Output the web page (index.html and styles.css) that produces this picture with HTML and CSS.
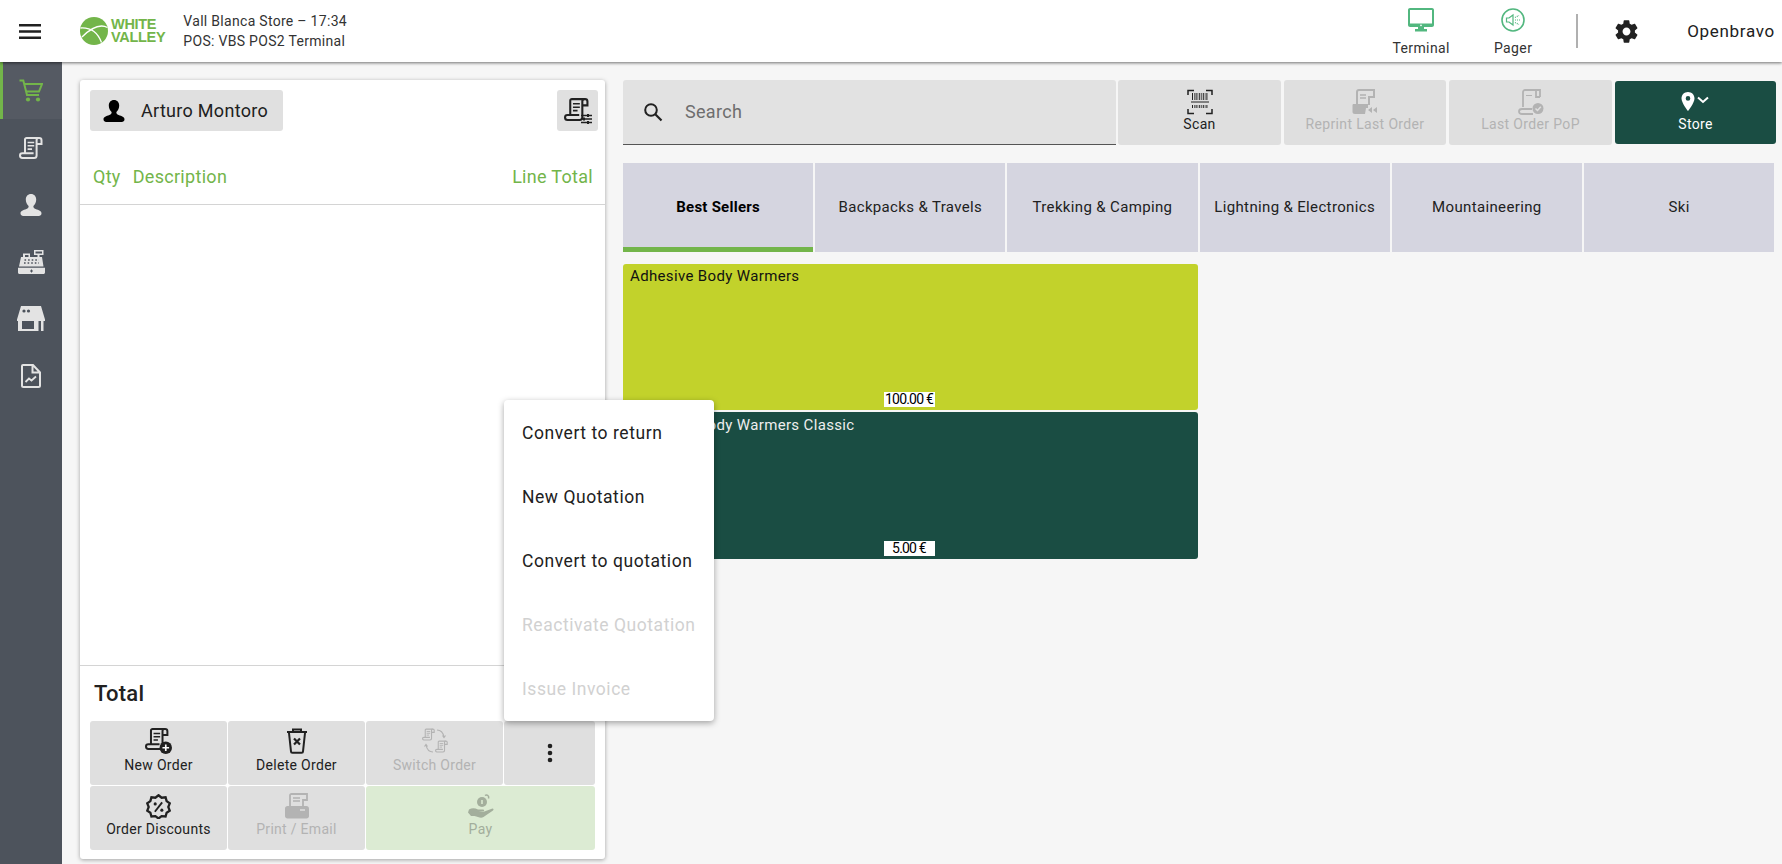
FILE: index.html
```html
<!DOCTYPE html>
<html lang="en">
<head>
<meta charset="utf-8">
<title>Openbravo POS</title>
<link rel="stylesheet" href="styles.css">
</head>
<body>
<svg class="defs" width="0" height="0" aria-hidden="true">
  <symbol id="i-receipt" viewBox="0 0 24 24">
    <path fill="none" stroke="currentColor" stroke-width="2" d="M6 17V3.6C6 2.7 6.700 2 7.600 2H19.500M19.500 2C18.400 2 17.600 2.900 17.600 4V19.500C17.600 21 16.500 22 15 22H3.400C2 22 1 21 1 19.600 1 18.200 2 17.300 3.400 17.300H14.600"/>
    <path fill="none" stroke="currentColor" stroke-width="2" d="M18 2H20.200C21.500 2 22.500 3 22.500 4.200V8H18"/>
    <path stroke="currentColor" stroke-width="1.600" d="M8.600 6.500H15.200M8.600 9.800H15.200M8.600 13.100H13"/>
  </symbol>
  <symbol id="i-person" viewBox="0 0 24 24">
    <path fill="currentColor" d="M12 1C15.200 1 17.200 3.400 17.200 6.600 17.200 9.400 16 11.800 14.400 13 14.200 14.400 14.900 15.400 16.600 16 19.800 17 22.500 18 22.500 20.400 22.500 22.300 20.600 23 18.500 23H5.500C3.400 23 1.500 22.300 1.500 20.400 1.500 18 4.200 17 7.400 16 9.100 15.400 9.800 14.400 9.600 13 8 11.800 6.800 9.400 6.800 6.600 6.800 3.400 8.800 1 12 1Z"/>
  </symbol>
</svg>

<header class="topbar">
  <button class="menu-btn" aria-label="Menu">
    <svg viewBox="0 0 22 15" width="22" height="15"><path fill="#212121" d="M0 0H22V2.400H0ZM0 6.300H22V8.700H0ZM0 12.600H22V15H0Z"/></svg>
  </button>
  <div class="logo">
    <svg class="logo-mark" viewBox="0 0 28 28" width="28" height="28">
      <circle cx="14" cy="14" r="14" fill="#73b54a"/>
      <path fill="none" stroke="#fff" stroke-width="1.300" d="M.5 11C8 10.500 17 13.500 21.500 25.500M2 20C8.500 13.500 18 5.500 27.500 10.500"/>
    </svg>
    <div class="logo-text"><span>WHITE</span><span>VALLEY</span></div>
  </div>
  <div class="store-info">
    <div>Vall Blanca Store – 17:34</div>
    <div>POS: VBS POS2 Terminal</div>
  </div>
  <div class="top-right">
    <div class="top-action term">
      <svg viewBox="0 0 26 24" width="26" height="24"><path fill="#52b77f" d="M2 0H24C25.100 0 26 .9 26 2V17C26 18.100 25.100 19 24 19H16V21H19V23.500H7V21H10V19H2C.9 19 0 18.100 0 17V2C0 .9.9 0 2 0ZM2 2V15.600H24V2Z"/><circle cx="13" cy="17.300" r=".9" fill="#fff"/></svg>
      <span>Terminal</span>
    </div>
    <div class="top-action pager">
      <svg viewBox="0 0 24 24" width="24" height="24"><circle cx="12" cy="12" r="11" fill="none" stroke="#52b77f" stroke-width="1.600"/><path fill="none" stroke="#52b77f" stroke-width="1.200" d="M5.500 10V14H8L12 17V7L8 10Z"/><path stroke="#52b77f" stroke-width="1.200" stroke-dasharray="1 1" d="M14 12H19M14 9.500L18 7.500M14 14.500L18 16.500"/></svg>
      <span>Pager</span>
    </div>
    <div class="divider"></div>
    <svg class="gear" viewBox="0 0 24 24" width="27" height="27"><path fill="#212121" d="M19.430 12.980c.04-.32.07-.64.07-.98s-.03-.66-.07-.98l2.110-1.650c.19-.15.24-.42.12-.64l-2-3.460c-.12-.22-.39-.3-.61-.22l-2.490 1c-.52-.4-1.080-.73-1.690-.98l-.38-2.650C14.460 2.180 14.250 2 14 2h-4c-.25 0-.46.18-.49.42l-.38 2.650c-.61.25-1.170.59-1.690.98l-2.490-1c-.23-.09-.49 0-.61.22l-2 3.460c-.13.22-.07.49.12.64l2.110 1.650c-.04.32-.07.65-.07.98s.03.66.07.98l-2.110 1.650c-.19.15-.24.42-.12.64l2 3.460c.12.22.39.3.61.22l2.490-1c.52.4 1.080.73 1.690.98l.38 2.650c.03.24.24.42.49.42h4c.25 0 .46-.18.49-.42l.38-2.650c.61-.25 1.170-.59 1.690-.98l2.490 1c.23.09.49 0 .61-.22l2-3.460c.12-.22.07-.49-.12-.64l-2.110-1.650zM12 15.500c-1.930 0-3.500-1.570-3.500-3.500s1.570-3.500 3.500-3.500 3.500 1.570 3.500 3.500-1.570 3.500-3.500 3.500z"/></svg>
    <div class="user-name">Openbravo</div>
  </div>
</header>

<div class="app">
  <nav class="sidebar">
    <div class="nav-item active">
      <svg viewBox="0 0 24 24" width="24" height="24"><path fill="none" stroke="#73b54a" stroke-width="2" d="M.5 1.500H4.300L8 16H20"/><path fill="none" stroke="#73b54a" stroke-width="2" d="M5.200 5H23L20 12.500H7"/><circle cx="9" cy="20.500" r="2.100" fill="#73b54a"/><circle cx="19" cy="20.500" r="2.100" fill="#73b54a"/></svg>
    </div>
    <div class="nav-item"><svg width="24" height="24"><use href="#i-receipt"/></svg></div>
    <div class="nav-item"><svg width="24" height="24"><use href="#i-person"/></svg></div>
    <div class="nav-item">
      <svg viewBox="0 0 27 26" width="27" height="26"><path fill="currentColor" d="M16 1H25.500V6H21.500V8H24L25.500 17.500H1L3 8H5V4.500H12V8H19.500V6H16ZM17.500 2.400V4.600H24V2.400ZM7 6V8H10.500V6ZM0 18.800H27V23.500C27 24.300 26.300 25 25.500 25H1.500C.7 25 0 24.300 0 23.500Z"/><path stroke="#4d535c" stroke-width="1.500" stroke-dasharray="1.600 2" d="M6.500 11H21M6 14H21"/><path stroke="#4d535c" d="M13.500 20.500V23.500M12 22H15"/></svg>
    </div>
    <div class="nav-item">
      <svg viewBox="0 0 28 25" width="28" height="25"><path fill="currentColor" d="M4 0H24L28 13.500V15H26.500V25H24V15H21.500V25H1V15H0V13.500ZM5 15V23H17V15Z"/><circle cx="7" cy="5" r="1.600" fill="#4d535c"/><circle cx="11.500" cy="5" r="1.600" fill="#4d535c"/></svg>
    </div>
    <div class="nav-item">
      <svg viewBox="0 0 20 24" width="20" height="24"><path fill="none" stroke="currentColor" stroke-width="2" d="M2 1H12L19 8.500V21.500C19 22.300 18.300 23 17.500 23H2.500C1.700 23 1 22.300 1 21.500V2C1 1.400 1.400 1 2 1ZM11.500 1.500V8.500H18.500"/><path fill="none" stroke="currentColor" stroke-width="1.800" d="M4.500 18L8 14.500 10.500 16.500 15 12.500"/></svg>
    </div>
  </nav>

  <main class="main">
    <section class="ticket">
      <div class="ticket-top">
        <div class="customer">
          <svg width="24" height="24"><use href="#i-person"/></svg>
          <span>Arturo Montoro</span>
        </div>
        <button class="ticket-opts" aria-label="Ticket options">
          <svg viewBox="0 0 28 28" width="28" height="28"><use href="#i-receipt" width="25" height="25"/><path stroke="#212121" stroke-width="1.500" d="M17 18.500H28M17 22H28M17 25.500H28"/><path stroke="#212121" stroke-width="2" d="M24 17V20M20 20.500V23.500M24 24V27"/></svg>
        </button>
      </div>
      <div class="ticket-head">
        <span class="col-qty">Qty</span>
        <span class="col-desc">Description</span>
        <span class="col-total">Line Total</span>
      </div>
      <div class="ticket-lines"></div>
      <div class="ticket-total">Total</div>
      <div class="ticket-actions">
        <button class="act">
          <svg viewBox="0 0 26 26" width="27" height="27"><use href="#i-receipt" width="23" height="23"/><circle cx="20" cy="20" r="6" fill="#212121"/><path stroke="#fff" stroke-width="1.600" d="M16.800 20H23.200M20 16.800V23.200"/></svg>
          <span>New Order</span>
        </button>
        <button class="act">
          <svg viewBox="0 0 22 26" width="22" height="26"><path fill="none" stroke="#212121" stroke-width="2" d="M1 4H21M7 4V1.500H15V4M3 5L5 23.500C5 24.300 5.700 24.800 6.400 24.800H15.600C16.300 24.800 17 24.300 17 23.500L19 5"/><path stroke="#212121" stroke-width="2.200" d="M8 10.500L14 16.500M14 10.500L8 16.500"/></svg>
          <span>Delete Order</span>
        </button>
        <button class="act off">
          <svg viewBox="0 0 26 26" width="26" height="26"><use href="#i-receipt" x="0" y="0" width="13" height="13"/><use href="#i-receipt" x="13" y="12" width="13" height="13"/><path fill="none" stroke="currentColor" stroke-width="1.200" d="M15 2C18 2 21 4 22 9M20.500 7.500L22 9.500 23.500 7.500M11 24C8 24 5 22 4 17M2.500 18.500L4 16.500 5.500 18.500"/></svg>
          <span>Switch Order</span>
        </button>
        <button class="act more" aria-label="More">
          <svg viewBox="0 0 6 20" width="6" height="20"><circle cx="3" cy="3" r="2.300" fill="#212121"/><circle cx="3" cy="10" r="2.300" fill="#212121"/><circle cx="3" cy="17" r="2.300" fill="#212121"/></svg>
        </button>
        <button class="act low">
          <svg viewBox="0 0 24 24" width="25" height="25"><path fill="none" stroke="#212121" stroke-width="2.200" d="M12 1.200L15 3.600 18.800 3.200 19.800 6.800 22.800 9 21.400 12.500 22.800 16 19.800 18 18.800 21.600 15 21.200 12 23.500 9 21.200 5.200 21.600 4.200 18 1.200 16 2.600 12.500 1.200 9 4.200 6.800 5.200 3.200 9 3.600Z"/><path stroke="#212121" stroke-width="1.800" d="M15.500 8L8.500 17"/><circle cx="8.800" cy="9.500" r="1.500" fill="#212121"/><circle cx="15.200" cy="15.500" r="1.500" fill="#212121"/></svg>
          <span>Order Discounts</span>
        </button>
        <button class="act off low">
          <svg viewBox="0 0 24 26" width="24" height="26"><path fill="none" stroke="currentColor" stroke-width="1.800" d="M5 13V2.500C5 1.700 5.700 1 6.500 1H22V7H18V13"/><path stroke="currentColor" stroke-width="1.500" d="M8 5H15M8 8H15"/><path fill="currentColor" d="M2.500 13H21.500C22.900 13 24 14.100 24 15.500V23C24 24.400 22.900 25.500 21.500 25.500H2.500C1.100 25.500 0 24.400 0 23V15.500C0 14.100 1.100 13 2.500 13Z"/><path stroke="#dfdfdf" stroke-width="1.500" d="M15 17H20"/></svg>
          <span>Print / Email</span>
        </button>
        <button class="act pay low">
          <svg viewBox="0 0 26 26" width="26" height="26"><circle cx="14" cy="9" r="5" fill="currentColor"/><path fill="none" stroke="currentColor" stroke-width="1.500" d="M17 2.500C19 1 21.500 3 20.500 5.500"/><path stroke="#dcebd3" stroke-width="1.500" d="M14 7V11"/><path fill="currentColor" d="M1 16.500C4 14.500 7 15 10 16.500H15C16.500 16.500 16.500 18.500 15 18.500H10.500L15 19 24.500 15.500C25.500 15.500 26 16.500 25 17.500L15.500 24C13 25.500 10 24 6.500 23H3L0 19.500Z"/></svg>
          <span>Pay</span>
        </button>
      </div>
    </section>

    <section class="catalog">
      <div class="toolbar">
        <div class="search">
          <svg viewBox="0 0 20 20" width="20" height="20"><circle cx="8" cy="8" r="5.800" fill="none" stroke="#212121" stroke-width="2"/><path stroke="#212121" stroke-width="2.200" d="M12.300 12.300L18.500 18.500"/></svg>
          <span>Search</span>
        </div>
        <button class="tool scan">
          <svg viewBox="0 0 26 26" width="26" height="26"><path fill="none" stroke="#212121" stroke-width="1.500" d="M1 6V1.500H7M19 1.500H25V6M1 20V24.500H7M19 24.500H25V20"/><path stroke="#212121" stroke-dasharray="1 1 .6 1" stroke-width="7" d="M5 7.500H21"/><path stroke="#212121" stroke-width="1" d="M4 13H22"/><path stroke="#212121" stroke-dasharray="1 1 .6 1" stroke-width="3" d="M5 17.500H21"/></svg>
          <span>Scan</span>
        </button>
        <button class="tool off reprint">
          <svg viewBox="0 0 26 26" width="26" height="26"><path fill="none" stroke="currentColor" stroke-width="2" d="M5 16V3C5 2 6 1 7 1H22V8H17V16"/><path stroke="currentColor" stroke-width="1.600" d="M8 6H14M8 9H14"/><path fill="currentColor" d="M1 15H16V19H14L13 25H3C1.500 25 .5 24 .5 23V16Z"/><path fill="currentColor" d="M20 18V24L16 21ZM25 18V24L21 21Z"/></svg>
          <span>Reprint Last Order</span>
        </button>
        <button class="tool off">
          <svg viewBox="0 0 26 26" width="26" height="26"><path fill="none" stroke="currentColor" stroke-width="1.800" d="M5 18V3C5 2 6 1 7 1H22V8M18 1V8H22M4 25H15M4 25C2 25 1 24 1 22.500 1 21 2 20 4 20H14"/><path fill="currentColor" d="M8 6H14V7H8Z"/><circle cx="20" cy="19.500" r="5.500" fill="currentColor"/><path fill="none" stroke="#dfdfdf" stroke-width="1.500" d="M17.500 19.500L19.500 21.500 22.800 17.800"/></svg>
          <span>Last Order PoP</span>
        </button>
        <button class="tool store">
          <svg viewBox="0 0 30 20" width="30" height="20"><path fill="#fff" d="M7 0C3.300 0 .5 2.800 .5 6.500 .5 11 7 19 7 19S13.500 11 13.500 6.500C13.500 2.800 10.700 0 7 0ZM7 8.700A2.300 2.300 0 1 1 7 4.100 2.300 2.300 0 0 1 7 8.700Z"/><path fill="none" stroke="#fff" stroke-width="2" d="M17 5.500L22 10 27 5.500"/></svg>
          <span>Store</span>
        </button>
      </div>

      <div class="tabs">
        <div class="tab current">Best Sellers</div>
        <div class="tab">Backpacks &amp; Travels</div>
        <div class="tab">Trekking &amp; Camping</div>
        <div class="tab">Lightning &amp; Electronics</div>
        <div class="tab">Mountaineering</div>
        <div class="tab">Ski</div>
      </div>

      <div class="products">
        <div class="product lime">
          <div class="product-name">Adhesive Body Warmers</div>
          <div class="price">100.00 €</div>
        </div>
        <div class="product dark">
          <div class="product-name">Adhesive Body Warmers Classic</div>
          <div class="price">5.00 €</div>
        </div>
      </div>
    </section>
  </main>
</div>

<div class="menu">
  <div class="menu-item">Convert to return</div>
  <div class="menu-item">New Quotation</div>
  <div class="menu-item">Convert to quotation</div>
  <div class="menu-item disabled">Reactivate Quotation</div>
  <div class="menu-item disabled">Issue Invoice</div>
</div>
</body>
</html>
```

FILE: styles.css
```css
* { box-sizing: border-box; }
html, body { margin: 0; height: 100%; overflow: hidden; }
body {
  font-family: Roboto, "Liberation Sans", sans-serif;
  color: #212121;
  background: #f6f6f6;
  display: flex;
  flex-direction: column;
}
button { font: inherit; color: inherit; border: 0; padding: 0; }
.defs { position: absolute; }

.topbar {
  height: 62px;
  flex: none;
  background: #fff;
  display: flex;
  align-items: center;
  box-shadow: 0 1px 3px rgba(0,0,0,.55);
  position: relative;
  z-index: 2;
}
.menu-btn { width: 22px; height: 15px; margin-left: 19px; background: none; display: flex; }
.logo { display: flex; align-items: center; margin-left: 39px; gap: 3px; }
.logo-mark { display: block; }
.logo-text {
  display: flex; flex-direction: column;
  font-family: "Liberation Sans", sans-serif;
  font-weight: 700; font-size: 14.500px; line-height: 13px;
  color: #73b54a; letter-spacing: -.3px;
}
.store-info { margin-left: 18px; font-size: 14px; line-height: 20px; letter-spacing: .3px; color: #333; }
.top-right { margin-left: auto; display: flex; align-items: center; height: 100%; }
.top-action { display: flex; flex-direction: column; align-items: center; font-size: 14px; letter-spacing: .4px; line-height: 16px; color: #333; padding-top: 2px; }
.top-action svg { display: block; margin-bottom: 8px; }
.term { width: 60px; }
.pager { width: 60px; margin-left: 32px; }
.divider { width: 2px; height: 34px; background: #b0b0b0; margin-left: 33px; }
.gear { margin-left: 35px; display: block; }
.user-name { font-size: 17px; letter-spacing: .7px; margin-left: 47px; margin-right: 7px; }

.app { flex: 1; display: flex; min-height: 0; }
.sidebar { width: 62px; flex: none; background: #4d535c; display: flex; flex-direction: column; color: #e3e3e3; }
.nav-item { height: 57px; display: flex; align-items: center; justify-content: center; }
.nav-item.active { background: #555a63; border-left: 3px solid #73b54a; padding-right: 3px; color: #73b54a; }

.main { flex: 1; display: flex; padding: 18px 6px 5px 18px; gap: 18px; min-width: 0; }
.ticket {
  width: 525px; flex: none;
  background: #fff; border-radius: 3px;
  box-shadow: 0 1px 4px rgba(0,0,0,.35);
  display: flex; flex-direction: column;
  padding: 10px 10px 9px;
}
.ticket-top { display: flex; justify-content: space-between; height: 41px; flex: none; }
.customer {
  width: 193px; background: #e0e0e0; border-radius: 3px;
  display: flex; align-items: center; gap: 15px; padding-left: 12px;
  font-size: 18px; letter-spacing: .3px; color: #212121;
}
.customer svg { color: #000; }
.ticket-opts { width: 41px; margin-right: -3px; background: #e0e0e0; border-radius: 3px; display: flex; align-items: center; justify-content: center; color: #212121; }
.ticket-head {
  margin: 0 -10px; padding: 0 12px 0 13px; height: 74px;
  flex: none;
  display: flex; align-items: center; padding-top: 18px;
  border-bottom: 1px solid #d4d4d4;
  color: #73b54a; font-size: 18px; letter-spacing: .3px;
}
.col-desc { margin-left: 12px; }
.col-total { margin-left: auto; }
.ticket-lines { flex: 1; margin: 0 -10px; border-bottom: 1px solid #d4d4d4; }
.ticket-total { height: 55px; flex: none; display: flex; align-items: center; padding: 0 4px; font-size: 22px; font-weight: 500; letter-spacing: .2px; }
.ticket-actions { display: grid; grid-template-columns: 137px 137px 137px 91px; grid-auto-rows: 64px; gap: 1px; flex: none; height: 129px; width: 505px; }
.act {
  background: #dfdfdf; border-radius: 3px;
  display: flex; flex-direction: column; align-items: center; justify-content: flex-end;
  font-size: 14px; letter-spacing: .3px; line-height: 16px; padding-bottom: 12px; color: #212121;
  gap: 3px;
}
.act.low { padding-bottom: 13px; gap: 2px; }
.act svg { display: block; }
.act.off { color: #b3b3b3; }
.act.more { justify-content: center; padding: 0; }
.act.pay { grid-column: span 2; background: #dcebd3; color: #a3ae9c; }

.catalog { flex: 1; min-width: 0; display: flex; flex-direction: column; }
.toolbar { display: flex; height: 65px; flex: none; }
.search {
  width: 493px; flex: none; background: #e2e2e2; border-bottom: 1px solid #555;
  border-radius: 3px 3px 0 0;
  display: flex; align-items: center; padding-left: 20px; gap: 22px; padding-bottom: 1px;
  font-size: 18px; color: #6e6e6e; letter-spacing: .3px;
}
.tool {
  width: 163px; flex: none; margin-left: 3px; background: #dfdfdf; border-radius: 3px;
  display: flex; flex-direction: column; align-items: center; justify-content: flex-end;
  font-size: 14px; letter-spacing: .35px; line-height: 16px; padding-bottom: 13px; gap: 1px; color: #212121;
}
.tool.scan { margin-left: 2px; }
.tool.reprint { width: 162px; }
.tool svg { display: block; }
.tool.off { color: #b3b3b3; }
.tool.store { width: 161px; background: #1a4d43; color: #fff; margin-top: 1px; height: 63px; padding-bottom: 12px; gap: 4px; }

.tabs { display: flex; gap: 2px; margin-top: 18px; height: 89px; flex: none; }
.tab {
  width: 190.200px; background: #d5d5e0;
  display: flex; align-items: center; justify-content: center;
  font-size: 15px; letter-spacing: .35px; color: #212121; padding-top: 4px;
  border-bottom: 5px solid transparent;
}
.tab.current { font-weight: 700; color: #000; border-bottom-color: #73b54a; letter-spacing: .25px; }

.products { display: flex; flex-direction: column; gap: 2px; width: 575px; margin-top: 12px; }
.product { height: 146px; border-radius: 3px; padding: 4px 7px 3px; display: flex; flex-direction: column; align-items: center; justify-content: space-between; font-size: 15px; letter-spacing: .35px; }
.product.dark { height: 147px; padding-top: 5px; }
.product-name { align-self: flex-start; line-height: 16px; }
.lime { background: #c2d22b; color: #111; }
.dark { background: #1a4d43; color: #eee; }
.price { background: #fff; color: #000; width: 51px; height: 15px; font-size: 14px; line-height: 15px; text-align: center; letter-spacing: -.8px; margin-left: -3px; white-space: nowrap; }

.menu {
  position: absolute; left: 504px; top: 400px; width: 210px; height: 321px;
  background: #fff; border-radius: 4px; z-index: 5;
  box-shadow: 0 2px 6px rgba(0,0,0,.35);
  display: flex; flex-direction: column;
  padding-top: 1px;
}
.menu-item { height: 64px; display: flex; align-items: center; padding-left: 18px; font-size: 17.500px; letter-spacing: .55px; color: #212121; white-space: nowrap; }
.menu-item.disabled { color: #d1d1d1; }
```
